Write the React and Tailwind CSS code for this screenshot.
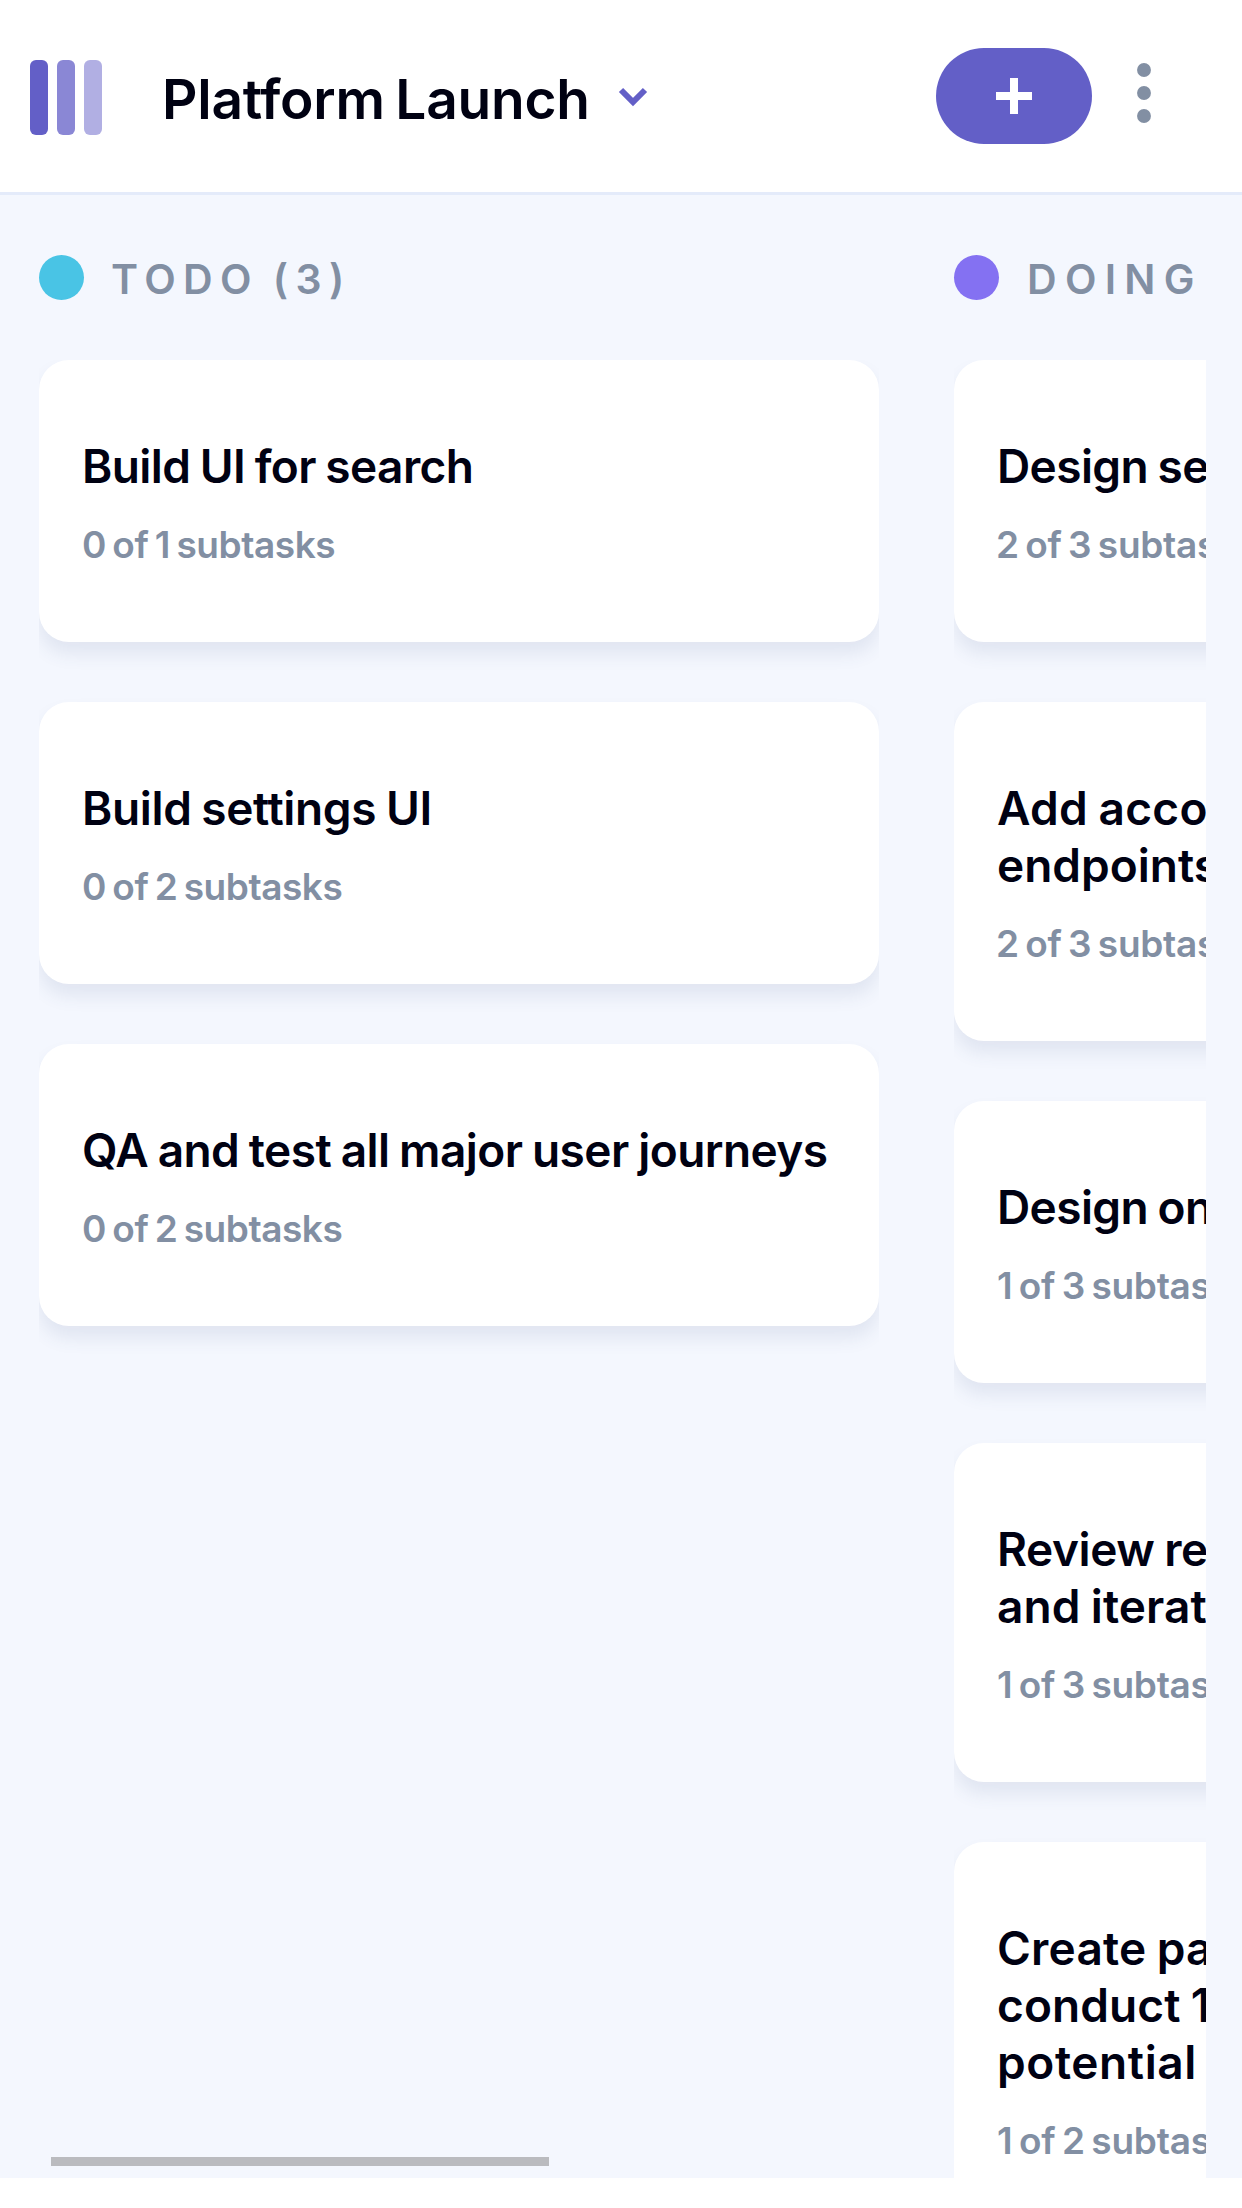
const columns = [
  {
    name: 'TODO (3)',
    dot: 'bg-[#49c4e5]',
    tracking: 'ml-[-1px] tracking-[7.4px] [word-spacing:-4px]',
    tasks: [
      { lines: [['Build UI for search', 'tracking-[-0.6px]']], done: '0 of 1 subtasks', doneTracking: 'tracking-[-0.43px]' },
      { lines: [['Build settings UI', 'tracking-[-0.35px]']], done: '0 of 2 subtasks', doneTracking: 'tracking-[-0.45px]' },
      { lines: [['QA and test all major user journeys', 'tracking-[-0.55px]']], done: '0 of 2 subtasks', doneTracking: 'tracking-[-0.45px]' },
    ],
  },
  {
    name: 'DOING (6)',
    dot: 'bg-[#8471f2]',
    tracking: 'tracking-[8.3px]',
    tasks: [
      { lines: [['Design settings and search pages', 'tracking-[-0.6px]']], done: '2 of 3 subtasks', doneTracking: 'ml-[-1px] tracking-[-0.3px]' },
      {
        lines: [['Add account management', 'tracking-[0.3px]'], ['endpoints', 'tracking-[0px]']],
        done: '2 of 3 subtasks',
        doneTracking: 'ml-[-1px] tracking-[-0.3px]',
      },
      { lines: [['Design onboarding flow', 'tracking-[-0.6px]']], done: '1 of 3 subtasks', doneTracking: 'tracking-[-0.3px]' },
      {
        lines: [['Review results of usability tests', 'tracking-[-0.4px]'], ['and iterate', 'tracking-[0.1px]']],
        done: '1 of 3 subtasks',
        doneTracking: 'tracking-[-0.3px]',
      },
      {
        lines: [
          ['Create paper prototypes and', 'tracking-[0.2px]'],
          ['conduct 10 usability tests with', 'tracking-[0.1px]'],
          ['potential customers', 'tracking-[0.6px]'],
        ],
        done: '1 of 2 subtasks',
        doneTracking: 'tracking-[-0.25px]',
      },
    ],
  },
];

function Logo() {
  return (
    <svg width="72" height="75" viewBox="0 0 72 75" className="shrink-0" fill="#635fc7">
      <rect width="18" height="75" rx="6" />
      <rect x="27" width="18" height="75" rx="6" opacity="0.75" />
      <rect x="54" width="18" height="75" rx="6" opacity="0.5" />
    </svg>
  );
}

function Header() {
  return (
    <header className="flex h-[195px] shrink-0 items-start border-b-3 border-[#e4ebfa] bg-white pl-[30px]">
      <div className="flex grow items-start pt-[60px]">
        <Logo />
        <h1 className="ml-[60px] mt-[3px] w-[457px] whitespace-nowrap text-[55px] leading-[72px] font-semibold tracking-[-0.24px] [word-spacing:-3px]">
          Platform Launch
        </h1>
        <svg width="30" height="21" viewBox="0 0 10 7" className="mt-[27px] ml-[-1px]" fill="none" stroke="#635fc7" strokeWidth="2">
          <path d="m1 1 4 4 4-4" />
        </svg>
      </div>
      <button className="mt-12 flex h-24 w-39 items-center justify-center rounded-full bg-[#635fc7]">
        <svg width="36" height="36" viewBox="0 0 36 36" fill="#fff">
          <path d="M14 0h8v14h14v8H22v14h-8V22H0v-8h14z" />
        </svg>
      </button>
      <button className="mt-[63px] mr-[91px] ml-[45px]">
        <svg width="14" height="60" viewBox="0 0 14 60" fill="#828fa3">
          <circle cx="7" cy="7" r="6.93" />
          <circle cx="7" cy="30" r="6.93" />
          <circle cx="7" cy="53" r="6.93" />
        </svg>
      </button>
    </header>
  );
}

function Card({ task }) {
  return (
    <article className="shrink-0 rounded-[30px] bg-white pt-[78px] pb-[74px] pl-[43px] whitespace-nowrap shadow-[0_12px_18px_rgba(54,78,126,0.1)]">
      <h3 className="text-[46px] leading-[57px] font-semibold [word-spacing:-1.5px]">
        {task.lines.map(([text, tracking]) => (
          <span key={text} className={`block ${tracking}`}>{text}</span>
        ))}
      </h3>
      <p className={`mt-[26px] text-[37px] leading-[47px] font-semibold text-[#828fa3] [word-spacing:-2.5px] ${task.doneTracking}`}>
        {task.done}
      </p>
    </article>
  );
}

function Column({ column }) {
  return (
    <section className="flex w-[840px] shrink-0 flex-col">
      <div className="flex h-[165px] shrink-0 items-start gap-7 pt-[60px]">
        <span className={`size-[45px] shrink-0 rounded-full ${column.dot}`} />
        <h2 className={`whitespace-nowrap text-[41px] leading-[48px] font-semibold text-[#828fa3] ${column.tracking}`}>
          {column.name}
        </h2>
      </div>
      <div className="flex min-h-0 grow flex-col gap-[60px] overflow-hidden">
        {column.tasks.map((task) => (
          <Card key={task.lines[0][0]} task={task} />
        ))}
      </div>
    </section>
  );
}

export default function App() {
  return (
    <div className="h-[2208px] w-[1242px] overflow-hidden bg-white font-['Inter',sans-serif] text-[#000112] antialiased">
      <div className="relative flex h-[2178px] flex-col bg-[#f4f7fe]">
        <Header />
        <main className="mr-9 ml-[39px] flex min-h-0 grow gap-[75px] overflow-hidden">
          {columns.map((column) => (
            <Column key={column.name} column={column} />
          ))}
        </main>
        <div className="absolute bottom-3 left-[51px] h-[9px] w-[498px] bg-[#babbbf]" />
      </div>
    </div>
  );
}
